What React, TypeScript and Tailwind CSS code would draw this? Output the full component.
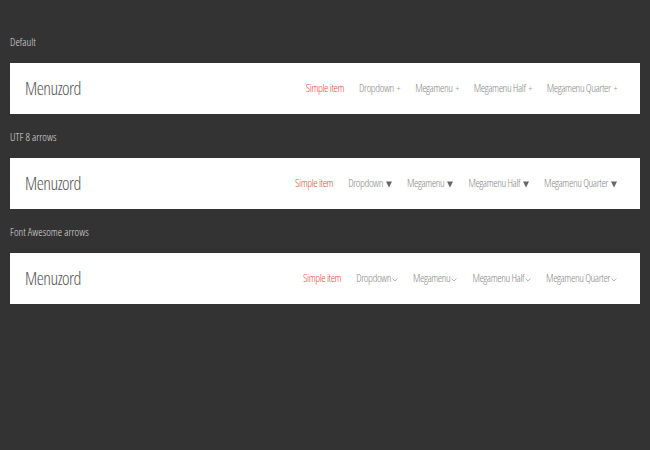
const sections = [
  { label: "Default", kind: "plus" },
  { label: "UTF 8 arrows", kind: "utf" },
  { label: "Font Awesome arrows", kind: "fa" },
];

const items = ["Dropdown", "Megamenu", "Megamenu Half", "Megamenu Quarter"];

function Arrow({ kind }: { kind: string }) {
  if (kind === "plus") {
    return <span className="ml-[3px] text-[9px] text-[#999]">+</span>;
  }
  if (kind === "utf") {
    return (
      <svg width="6" height="7" viewBox="0 0 6 7" className="ml-[3px] mt-[1px]">
        <path d="M0 0.5 H6 L3 6.5 Z" fill="#666" />
      </svg>
    );
  }
  return (
    <svg width="6" height="4" viewBox="0 0 6 4" className="ml-[1px] mt-[2px]">
      <path d="M0.5 0.5 L3 3 L5.5 0.5" fill="none" stroke="#aaa" strokeWidth="0.9" />
    </svg>
  );
}

export default function App() {
  return (
    <div
      className="min-h-[450px] w-[650px] bg-[#333333] pt-[33px] font-light font-stretch-condensed"
      style={{ fontFamily: "'Open Sans', sans-serif" }}
    >
      {sections.map((s) => (
        <div key={s.label} className="mb-[14px]">
          <p className="pl-[10px] text-[11px] leading-[18px] text-[#dddddd]">{s.label}</p>
          <div className="mx-[10px] mt-[12px] flex h-[51px] items-center justify-between bg-white pl-[15px] pr-[23px]">
            <span className="text-[18px] tracking-[-0.5px] text-[#555555]">Menuzord</span>
            <nav className="flex items-center gap-[15px] text-[11px] tracking-[-0.4px] text-[#888888]">
              <span className="text-[#e74c3c]">Simple item</span>
              {items.map((it) => (
                <span key={it} className="flex items-center">
                  {it}
                  <Arrow kind={s.kind} />
                </span>
              ))}
            </nav>
          </div>
        </div>
      ))}
    </div>
  );
}
